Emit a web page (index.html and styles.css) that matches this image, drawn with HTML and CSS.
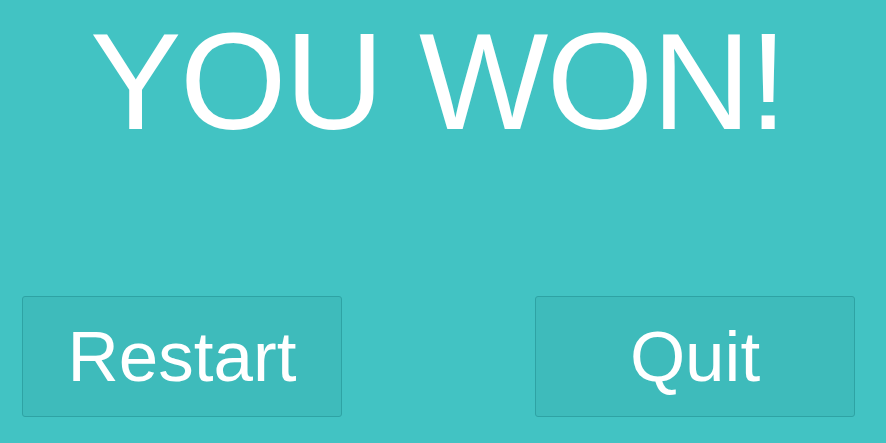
FILE: index.html
```html
<!DOCTYPE html>
<html>
<head>
<meta charset="utf-8">
<link rel="stylesheet" href="styles.css">
</head>
<body>
<main class="screen">
  <h1 class="title">YOU WON!</h1>
  <div class="actions">
    <button class="btn">Restart</button>
    <button class="btn">Quit</button>
  </div>
</main>
</body>
</html>
```
FILE: styles.css
```css
html, body {
  margin: 0;
  padding: 0;
  height: 100%;
  background: #42c3c3;
  overflow: hidden;
}
.screen {
  display: flex;
  flex-direction: column;
  font-family: "Liberation Sans", Arial, sans-serif;
  color: #ffffff;
}
.title {
  margin: 0;
  padding-top: 13px;
  font-weight: normal;
  font-size: 137px;
  line-height: 1;
  text-align: center;
  letter-spacing: -1.5px;
  padding-right: 10px;
}
.actions {
  display: flex;
  gap: 193px;
  padding-left: 22px;
  margin-top: 146px;
}
.btn {
  box-sizing: border-box;
  width: 320px;
  height: 121px;
  background: #3ebbbb;
  border: 1px solid #2ea3a4;
  border-radius: 3px;
  color: #ffffff;
  font-family: "Liberation Sans", Arial, sans-serif;
  font-size: 71px;
  line-height: 1;
  padding: 0;
  display: flex;
  align-items: center;
  justify-content: center;
}
```
